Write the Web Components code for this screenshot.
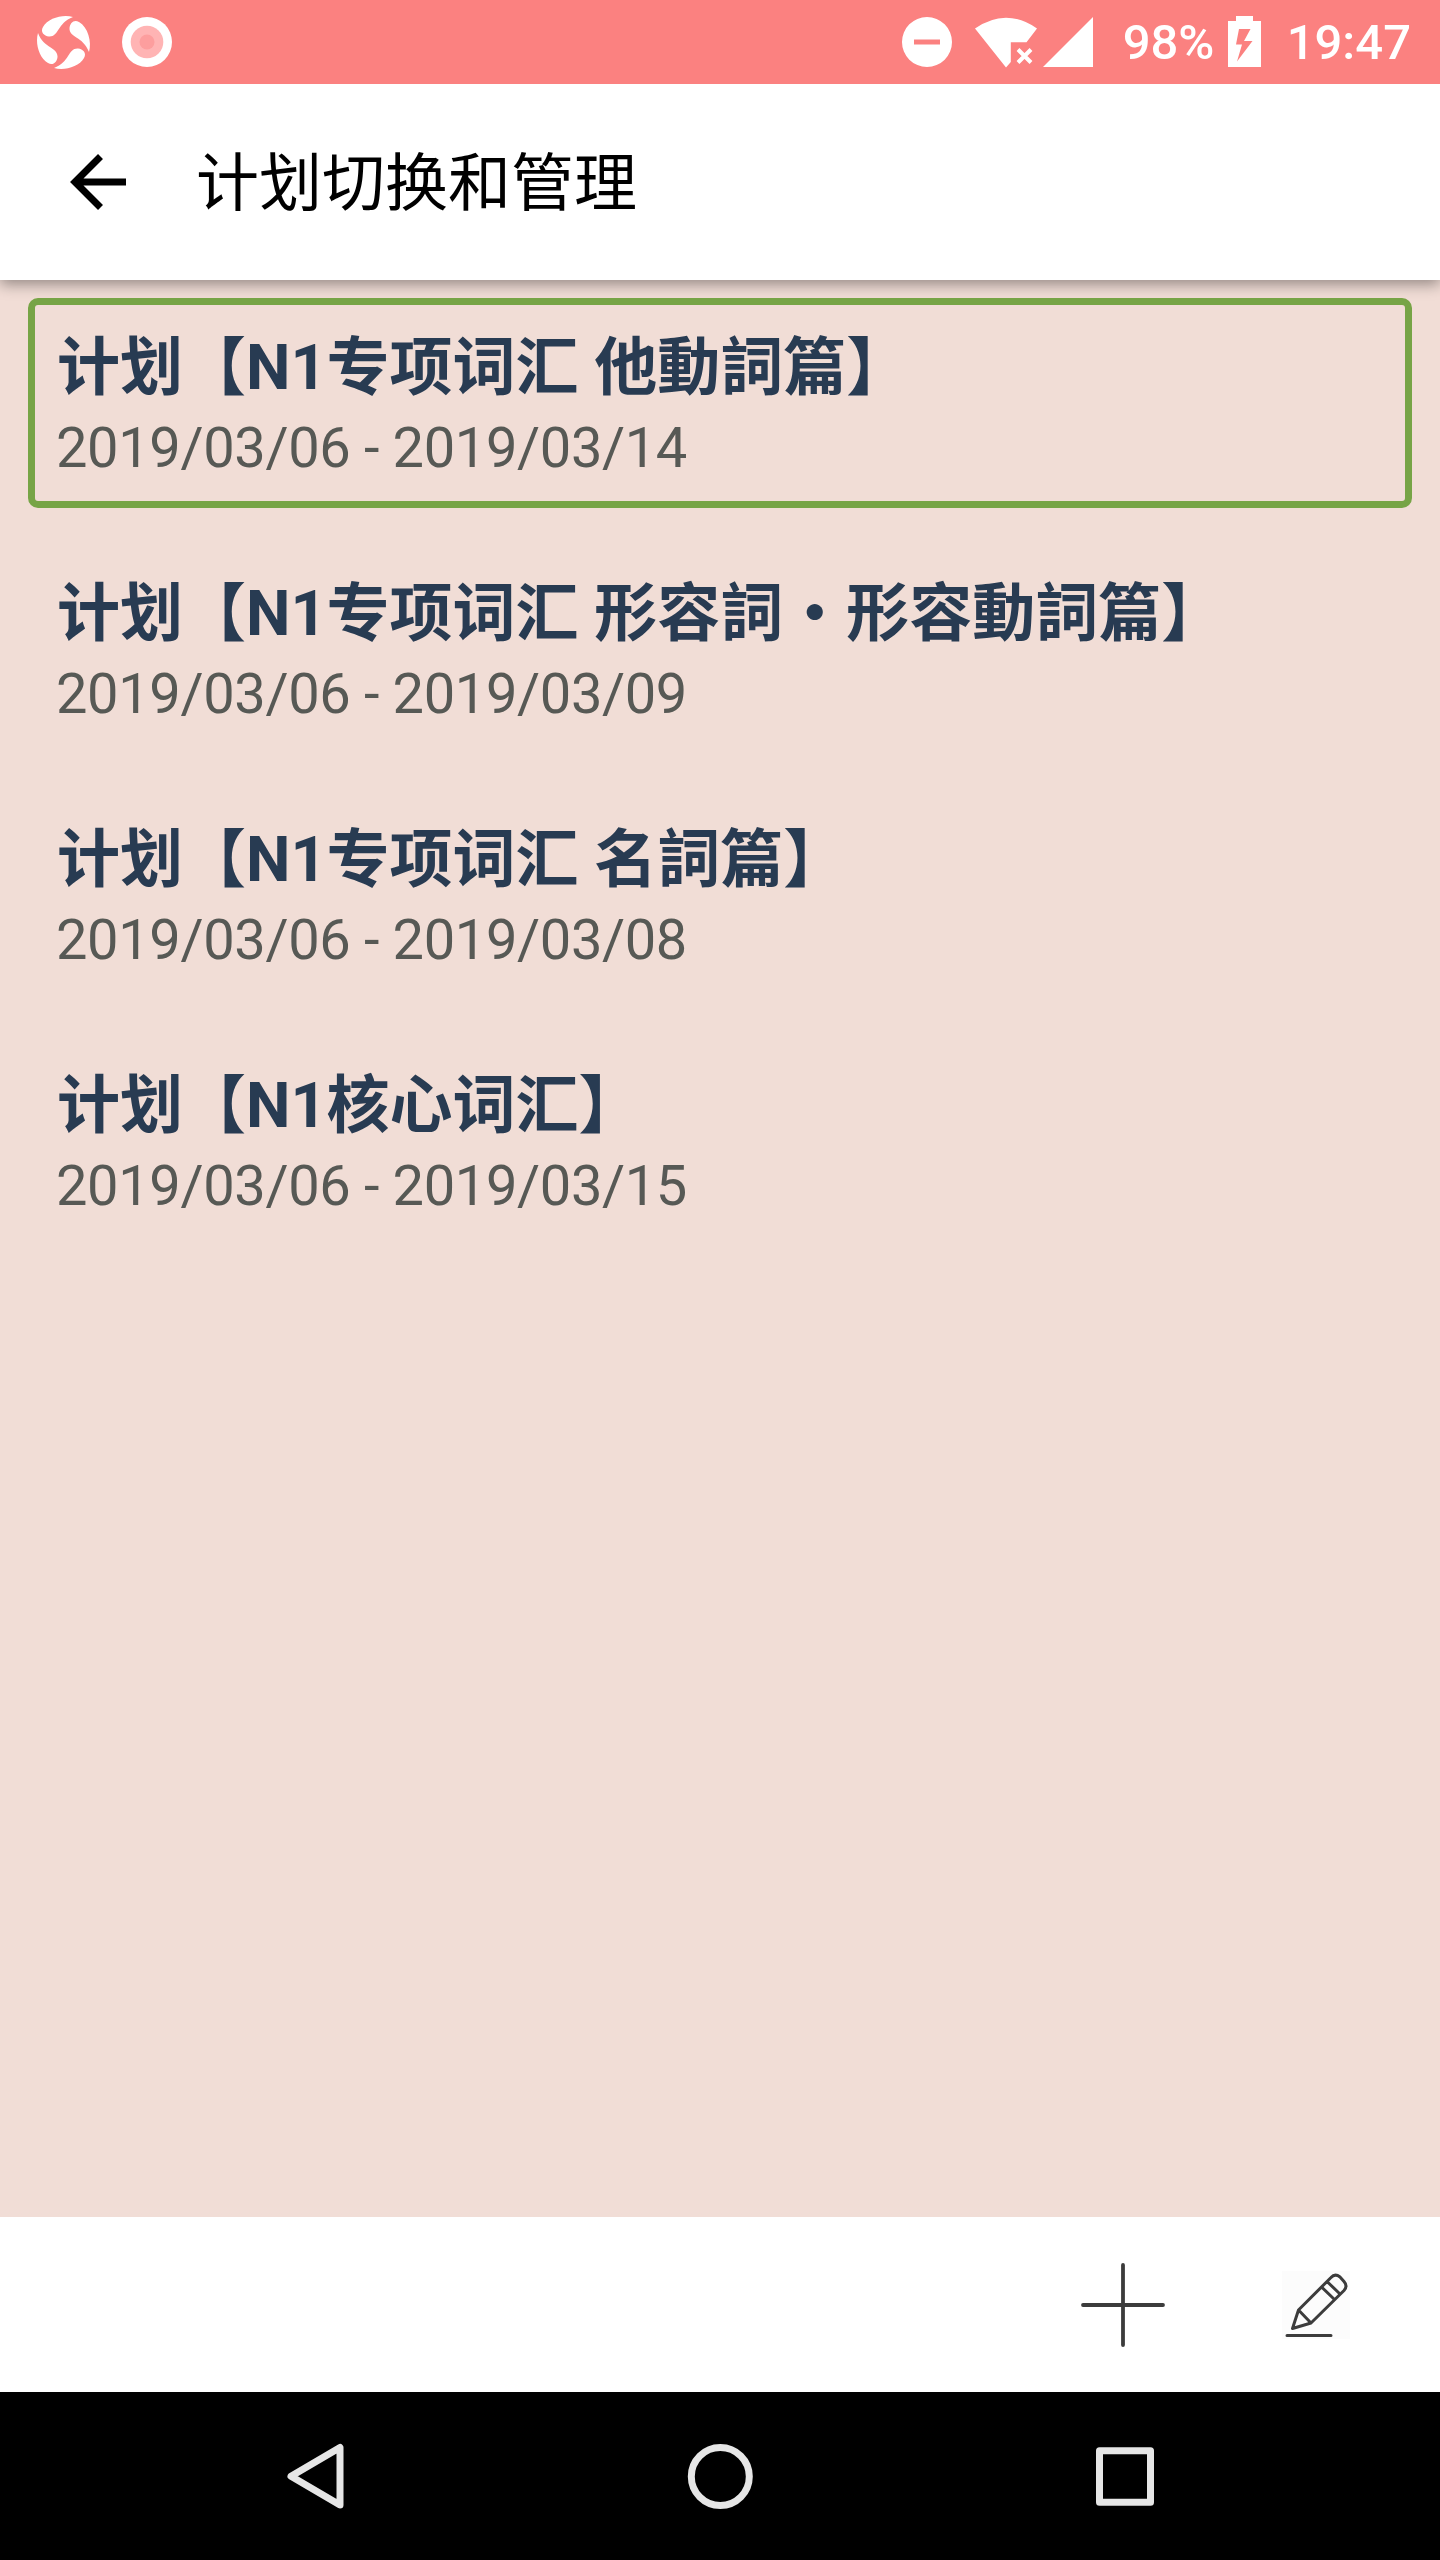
<!DOCTYPE html>
<html lang="zh-CN">
<head>
<meta charset="utf-8">
<title>计划切换和管理</title>
<style>
  body {
    margin: 0;
    font-family: Roboto, "Noto Sans CJK SC", sans-serif;
  }
</style>
</head>
<body>
<plan-screen>
  <status-bar slot="top" battery="98%" time="19:47"></status-bar>
  <app-header slot="top">计划切换和管理</app-header>
  <plan-item selected dates="2019/03/06 - 2019/03/14">计划【N1专项词汇 他動詞篇】</plan-item>
  <plan-item dates="2019/03/06 - 2019/03/09">计划【N1专项词汇 形容詞・形容動詞篇】</plan-item>
  <plan-item dates="2019/03/06 - 2019/03/08">计划【N1专项词汇 名詞篇】</plan-item>
  <plan-item dates="2019/03/06 - 2019/03/15">计划【N1核心词汇】</plan-item>
  <action-bar slot="bottom"></action-bar>
  <nav-bar slot="bottom"></nav-bar>
</plan-screen>

<script>
const html = String.raw;

class PlanScreen extends HTMLElement {
  constructor() {
    super();
    this.attachShadow({ mode: 'open' }).innerHTML = html`
      <style>
        :host {
          display: flex;
          flex-direction: column;
          width: 1440px;
          height: 2560px;
          overflow: hidden;
          background: #f1ddd6;
        }
        main {
          flex: 1;
          display: flex;
          flex-direction: column;
          gap: 36px;
          padding: 18px 28px;
        }
      </style>
      <slot name="top"></slot>
      <main><slot></slot></main>
      <slot name="bottom"></slot>
    `;
  }
}

class StatusBar extends HTMLElement {
  constructor() {
    super();
    this.attachShadow({ mode: 'open' }).innerHTML = html`
      <style>
        /* sits above the header so its shadow only falls downwards */
        :host {
          display: flex;
          align-items: center;
          box-sizing: border-box;
          height: 84px;
          padding: 0 29px 0 36px;
          position: relative;
          z-index: 1;
          background: #fb8180;
          color: #fff;
          font-size: 49px;
          font-weight: 500;
          line-height: 84px;
        }
        svg {
          display: block;
          height: 84px;
          fill: #fff;
        }
        .space { flex: 1; }
        .battery { width: 88px; margin: 0 17px 0 23px; text-align: right; }
        .time { margin-left: 25px; }
        span { padding-top: 2px; }
      </style>
      <svg width="140" viewBox="36 0 140 84">
        <path id="drop" d="M73 17C63 14 48 18 43 27C40 32 44 36 49 36.500C59 37 57 23 73 17Z"/>
        <use href="#drop" transform="rotate(90 63.500 42.500)"/>
        <use href="#drop" transform="rotate(180 63.500 42.500)"/>
        <use href="#drop" transform="rotate(270 63.500 42.500)"/>
        <circle cx="147" cy="42" r="25"/>
        <circle cx="147" cy="42" r="16.300" fill="#ffb4b4"/>
        <circle cx="147" cy="42" r="7.500" fill="#fd9e9e"/>
      </svg>
      <div class="space"></div>
      <svg width="200" viewBox="900 0 200 84">
        <path fill-rule="evenodd" d="M927 17a25 25 0 1 0 0 50a25 25 0 1 0 0-50ZM914 39.500h26v5h-26Z"/>
        <path d="M975 28.500Q1006 7 1037 28.500L1026.500 42.300H1010.800V62L1006 67.500Z"/>
        <path d="M1018 49.500l13 13M1031 49.500l-13 13" stroke="#fff" stroke-width="4"/>
        <path d="M1043 67L1093 17V67Z"/>
      </svg>
      <span class="battery"></span>
      <svg width="34" viewBox="1229 0 34 84">
        <path fill-rule="evenodd" d="M1229 21h8v-5h17v5h8V67h-33ZM1240 29L1237 44.500h6L1238 61.500L1253.500 41h-8.500L1251.500 29Z"/>
      </svg>
      <span class="time"></span>
    `;
  }

  connectedCallback() {
    this.shadowRoot.querySelector('.battery').textContent = this.getAttribute('battery');
    this.shadowRoot.querySelector('.time').textContent = this.getAttribute('time');
  }
}

class AppHeader extends HTMLElement {
  constructor() {
    super();
    this.attachShadow({ mode: 'open' }).innerHTML = html`
      <style>
        :host {
          display: flex;
          align-items: center;
          gap: 69px;
          box-sizing: border-box;
          height: 196px;
          padding-left: 70px;
          background: #fff;
          color: #000;
          font-size: 63px;
          line-height: 74px;
          box-shadow: 0 4px 14px rgba(0, 0, 0, 0.4);
        }
        svg { display: block; }
        div { padding-top: 4px; }
      </style>
      <svg width="57" height="58" viewBox="0 0 57 58" fill="none" stroke="#000" stroke-width="7">
        <path d="M56 29H5M30.500 3.500L5 29L30.500 54.500"/>
      </svg>
      <div><slot></slot></div>
    `;
  }
}

class PlanItem extends HTMLElement {
  constructor() {
    super();
    this.attachShadow({ mode: 'open' }).innerHTML = html`
      <style>
        :host {
          display: flex;
          flex-direction: column;
          box-sizing: border-box;
          height: 210px;
          padding: 21px 22px;
          border: 7px solid transparent;
          border-radius: 10px;
        }
        :host([selected]) { border-color: #77a446; }
        .name {
          color: #283b52;
          font-size: 63px;
          font-weight: 700;
          line-height: 84px;
          white-space: nowrap;
        }
        .dates {
          margin-left: -1px;
          color: #575955;
          font-size: 56px;
          letter-spacing: -0.36px;
          line-height: 76px;
        }
      </style>
      <div class="name"><slot></slot></div>
      <div class="dates"></div>
    `;
  }

  connectedCallback() {
    this.shadowRoot.querySelector('.dates').textContent = this.getAttribute('dates');
  }
}

class ActionBar extends HTMLElement {
  constructor() {
    super();
    this.attachShadow({ mode: 'open' }).innerHTML = html`
      <style>
        :host {
          display: flex;
          align-items: center;
          justify-content: flex-end;
          gap: 116px;
          box-sizing: border-box;
          height: 175px;
          padding-right: 90px;
          background: #fff;
        }
        svg {
          display: block;
          fill: none;
          stroke: #3c3c3c;
          stroke-width: 3;
          stroke-linecap: round;
          stroke-linejoin: round;
        }
      </style>
      <svg width="86" height="86" viewBox="0 0 86 86">
        <path d="M3 43H83M43 3V83" stroke-width="3.800"/>
      </svg>
      <svg width="68" height="68" viewBox="0 0 68 68">
        <rect width="68" height="68" fill="#fcfcfc" stroke="none"/>
        <path d="M10.500 57.500L16.500 39L49 6.500Q53 2 58 6L62 10.500Q66 15 62 19.500L29 52ZM16.500 39L29 52M39.500 16L52.500 28.500M45 10.500L58 23M5 64.500H49"/>
      </svg>
    `;
  }
}

class NavBar extends HTMLElement {
  constructor() {
    super();
    this.attachShadow({ mode: 'open' }).innerHTML = html`
      <style>
        :host {
          display: flex;
          align-items: center;
          justify-content: space-between;
          box-sizing: border-box;
          height: 168px;
          padding: 0 280px;
          background: #000;
        }
        svg {
          display: block;
          fill: none;
          stroke: #e6e6e6;
          stroke-width: 7;
          stroke-linejoin: round;
        }
      </style>
      <svg width="70" height="70" viewBox="0 0 70 70"><path d="M60 6.500V64L11 35.300Z"/></svg>
      <svg width="70" height="70" viewBox="0 0 70 70"><circle cx="35.300" cy="35.500" r="29"/></svg>
      <svg width="70" height="70" viewBox="0 0 70 70"><rect x="9.500" y="9.800" width="51" height="51.400"/></svg>
    `;
  }
}

customElements.define('plan-screen', PlanScreen);
customElements.define('status-bar', StatusBar);
customElements.define('app-header', AppHeader);
customElements.define('plan-item', PlanItem);
customElements.define('action-bar', ActionBar);
customElements.define('nav-bar', NavBar);
</script>
</body>
</html>
